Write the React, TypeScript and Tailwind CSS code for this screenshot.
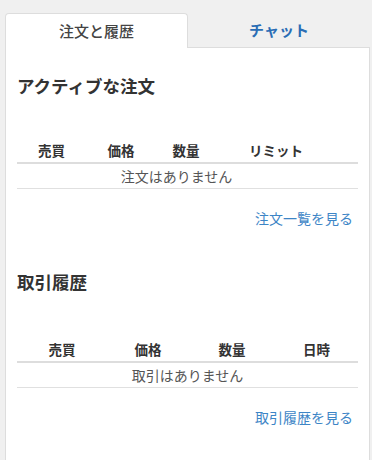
import React from "react";

const font = { fontFamily: '"Noto Sans CJK JP", "Noto Sans", sans-serif' };

export default function App() {
  return (
    <div
      className="w-[372px] h-[460px] overflow-hidden bg-[#f0f0f0] pl-[5px] pr-[2px] pt-[13px] flex flex-col"
      style={font}
    >
      <div className="flex h-[34px] shrink-0">
        <div className="relative z-10 w-[183px] h-[35px] bg-white border border-b-0 border-[#dddddd] rounded-t-[4px] flex items-center justify-center text-[15px] font-medium text-[#444]">
          注文と履歴
        </div>
        <div className="flex-1 flex items-center justify-center text-[15px] font-bold text-[#2a6db5]">
          チャット
        </div>
      </div>
      <div className="shrink-0 h-[440px] bg-white border border-[#dddddd] px-[11px] pt-[25px]">
        <h3 className="text-[17.5px] leading-[26px] font-bold text-[#333]">アクティブな注文</h3>
        <div className="mt-[39px]">
          <div className="grid grid-cols-[69px_70px_60px_120px_1fr] h-[24px] items-center text-[13.5px] font-bold text-[#333] border-b-2 border-[#dddddd] box-content">
            <div className="text-center">売買</div>
            <div className="text-center">価格</div>
            <div className="text-center">数量</div>
            <div className="text-center">リミット</div>
            <div></div>
          </div>
          <div className="grid grid-cols-[319px_1fr] h-[24px] items-center text-[14px] text-[#555] border-b border-[#e0e0e0] box-content">
            <div className="text-center">注文はありません</div>
            <div></div>
          </div>
        </div>
        <div className="mt-[19px] h-[20px] leading-[20px] text-right pr-[5px] text-[14px] text-[#3d85c6]">
          注文一覧を見る
        </div>
        <h3 className="mt-[41px] text-[17.5px] leading-[26px] font-bold text-[#333]">取引履歴</h3>
        <div className="mt-[42px]">
          <div className="grid grid-cols-[90px_82px_86px_1fr] h-[24px] items-center text-[13.5px] font-bold text-[#333] border-b-2 border-[#dddddd] box-content">
            <div className="text-center">売買</div>
            <div className="text-center">価格</div>
            <div className="text-center">数量</div>
            <div className="text-center">日時</div>
          </div>
          <div className="h-[24px] flex items-center justify-center text-[14px] text-[#555] border-b border-[#e0e0e0] box-content">
            取引はありません
          </div>
        </div>
        <div className="mt-[19px] h-[20px] leading-[20px] text-right pr-[5px] text-[14px] text-[#3d85c6]">
          取引履歴を見る
        </div>
      </div>
    </div>
  );
}
